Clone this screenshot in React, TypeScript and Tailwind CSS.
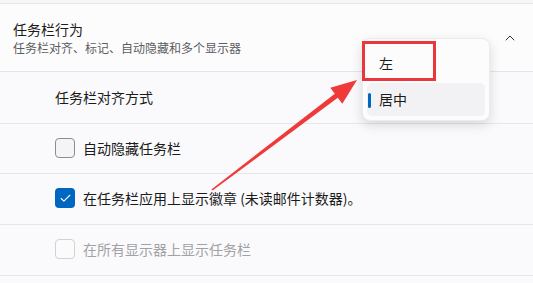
import { ChevronUp, Check } from "lucide-react";

const font = { fontFamily: '"Noto Sans CJK SC", "Noto Sans", sans-serif' };

type RowProps = {
  label: string;
  height: string;
  checked?: boolean;
  disabled?: boolean;
};

const CheckRow = ({ label, height, checked, disabled }: RowProps) => (
  <div className={`${height} flex items-center gap-[8px] border-b border-[#e6e6e9] pb-[2px] pl-[55px]`}>
    {checked ? (
      <span className="flex h-[20px] w-[20px] items-center justify-center rounded-[4px] bg-[#0067c0]">
        <Check className="h-[13px] w-[13px] text-white" strokeWidth={2} />
      </span>
    ) : (
      <span
        className={`h-[20px] w-[20px] rounded-[4px] border ${
          disabled ? "border-[#d2d2d4] bg-[#fbfbfc]" : "border-[#8d8d8f] bg-[#f4f4f6]"
        }`}
      />
    )}
    <span className={`text-[14px] leading-[18px] ${disabled ? "text-[#a2a2a4]" : "text-[#1b1b1b]"}`}>
      {label}
    </span>
  </div>
);

export default function App() {
  return (
    <div className="relative h-[283px] w-[533px] overflow-hidden bg-[#fafafc]" style={font}>
      <div className="h-[3px] bg-[#f6f7f9]" />
      <div className="flex h-[69px] items-center justify-between border-y border-[#e3e5ea] bg-[#fcfcfd] pl-[13px] pr-[15px]">
        <div className="flex flex-col gap-[1px]">
          <span className="text-[14px] leading-[19px] text-[#1b1b1b]">任务栏行为</span>
          <span className="text-[12px] leading-[16px] text-[#5d5d5f]">
            任务栏对齐、标记、自动隐藏和多个显示器
          </span>
        </div>
        <ChevronUp className="h-[16px] w-[16px] text-[#333]" strokeWidth={1.5} />
      </div>
      <div className="flex h-[52px] items-center border-b border-[#e6e6e9] pb-[2px] pl-[55px]">
        <span className="text-[14px] leading-[18px] text-[#1b1b1b]">任务栏对齐方式</span>
      </div>
      <CheckRow height="h-[50px]" label="自动隐藏任务栏" />
      <CheckRow height="h-[51px]" label="在任务栏应用上显示徽章 (未读邮件计数器)。" checked />
      <CheckRow height="h-[51px]" label="在所有显示器上显示任务栏" disabled />

      {/* dropdown menu */}
      <div className="absolute left-[362px] top-[38px] h-[83px] w-[128px] rounded-[8px] border border-[#ececee] bg-[#fcfcfd] p-[4px] shadow-[0_4px_12px_rgba(0,0,0,0.14)]">
        <div className="flex h-[40px] items-center pl-[12px] text-[14px] text-[#1b1b1b]">左</div>
        <div className="relative flex h-[33px] items-center rounded-[5px] bg-[#f2f2f4] pl-[12px] text-[14px] text-[#1b1b1b]">
          <span className="absolute left-[1px] top-[10px] h-[15px] w-[3px] rounded-full bg-[#0067c0]" />
          居中
        </div>
      </div>
      <div className="absolute left-[362px] top-[41px] h-[40px] w-[74px] border-[3px] border-[#e8383d]" />

      {/* annotation arrow */}
      <svg className="pointer-events-none absolute left-0 top-0" width="533" height="283">
        <polygon
          fill="#f03a3a"
          points="357,80 342.3,103.7 337.8,97.7 212.6,190.6 211.4,189.4 334.8,93.7 330.3,87.7"
        />
      </svg>
    </div>
  );
}
